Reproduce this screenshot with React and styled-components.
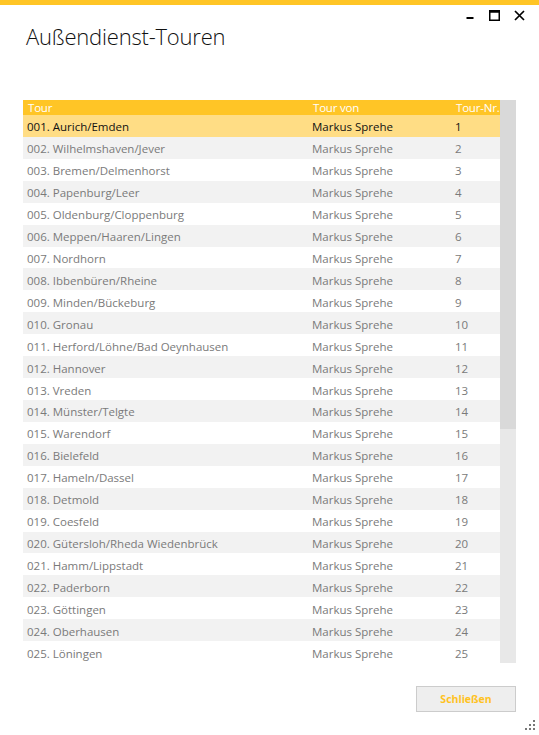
import React from "react";
import styled, { createGlobalStyle } from "styled-components";

const Global = createGlobalStyle`
  html, body { margin: 0; padding: 0; background: #fff; }
  body { font-family: "Open Sans", "Noto Sans", sans-serif; }
`;

const Window = styled.div`
  position: relative;
  width: 539px;
  height: 735px;
  box-sizing: border-box;
  border-top: 5px solid #ffc526;
  background: #fff;
  display: flex;
  flex-direction: column;
`;

const TitleBar = styled.div`
  display: flex;
  justify-content: flex-end;
  align-items: center;
  height: 14px;
  padding: 3px 7px 0 0;
`;

const WinBtn = styled.div`
  width: 25px;
  height: 12px;
  display: flex;
  align-items: center;
  justify-content: center;
`;

const Title = styled.h1`
  margin: 0;
  padding: 0 0 0 26px;
  font-family: "Open Sans", sans-serif;
  font-weight: 300;
  font-size: 22px;
  line-height: 28px;
  color: #111;
  letter-spacing: -0.2px;
`;

const TableArea = styled.div`
  margin: 50px 23px 0 23px;
  display: flex;
  height: 563px;
`;

const Table = styled.div`
  flex: 1;
  display: flex;
  flex-direction: column;
`;

const Row = styled.div`
  display: grid;
  box-sizing: border-box;
  grid-template-columns: 285px 143px 1fr;
  height: ${(p) => (p.$header ? "15px" : "22px")};
  padding-top: ${(p) => (p.$header ? "0" : "2px")};
  align-items: center;
  background: ${(p) =>
    p.$header ? "#ffc526" : p.$selected ? "#ffdd85" : p.$alt ? "#f2f2f2" : "#fff"};
  color: ${(p) => (p.$header ? "#fff" : p.$selected ? "#111" : "#7a7a7a")};
  font-size: 11.5px;
  line-height: 15px;
  white-space: nowrap;
`;

const Cell = styled.div`
  padding-left: ${(p) => (p.$header ? "5px" : "4px")};
  overflow: visible;
  letter-spacing: ${(p) => (p.$header ? "-0.2px" : "0")};
`;

const Scrollbar = styled.div`
  width: 17px;
  height: 563px;
  background: #e8e8e8;
  display: flex;
  flex-direction: column;
`;

const Thumb = styled.div`
  height: 329px;
  background: #d9d9d9;
`;

const Footer = styled.div`
  display: flex;
  justify-content: flex-end;
  padding: 23px 23px 0 0;
`;

const Button = styled.button`
  width: 100px;
  height: 26px;
  background: #eeeeee;
  border: 1px solid #cccccc;
  color: #ffc21f;
  font-family: "Open Sans", sans-serif;
  font-weight: 700;
  font-size: 10.5px;
  padding: 0;
  cursor: pointer;
`;

const Grip = styled.svg`
  position: absolute;
  right: 4px;
  bottom: 5px;
`;

const tours = [
  "Aurich/Emden",
  "Wilhelmshaven/Jever",
  "Bremen/Delmenhorst",
  "Papenburg/Leer",
  "Oldenburg/Cloppenburg",
  "Meppen/Haaren/Lingen",
  "Nordhorn",
  "Ibbenbüren/Rheine",
  "Minden/Bückeburg",
  "Gronau",
  "Herford/Löhne/Bad Oeynhausen",
  "Hannover",
  "Vreden",
  "Münster/Telgte",
  "Warendorf",
  "Bielefeld",
  "Hameln/Dassel",
  "Detmold",
  "Coesfeld",
  "Gütersloh/Rheda Wiedenbrück",
  "Hamm/Lippstadt",
  "Paderborn",
  "Göttingen",
  "Oberhausen",
  "Löningen",
];

export default function App() {
  return (
    <>
      <Global />
      <Window>
        <TitleBar>
          <WinBtn>
            <svg width="8" height="12" viewBox="0 0 8 12">
              <rect x="0.5" y="8" width="7" height="2" fill="#000" />
            </svg>
          </WinBtn>
          <WinBtn>
            <svg width="11" height="11" viewBox="0 0 11 11">
              <rect x="0.75" y="0.75" width="9.5" height="9.5" fill="none" stroke="#000" strokeWidth="1.5" />
              <rect x="0.75" y="0.75" width="9.5" height="2" fill="#000" />
            </svg>
          </WinBtn>
          <WinBtn>
            <svg width="11" height="11" viewBox="0 0 11 11">
              <path d="M1 1 L10 10 M10 1 L1 10" stroke="#000" strokeWidth="1.7" />
            </svg>
          </WinBtn>
        </TitleBar>
        <Title>Außendienst-Touren</Title>
        <TableArea>
          <Table>
            <Row $header>
              <Cell $header>Tour</Cell>
              <Cell $header>Tour von</Cell>
              <Cell $header>Tour-Nr.</Cell>
            </Row>
            {tours.map((t, i) => (
              <Row key={i} $selected={i === 0} $alt={i % 2 === 1}>
                <Cell>{`${String(i + 1).padStart(3, "0")}. ${t}`}</Cell>
                <Cell>Markus Sprehe</Cell>
                <Cell>{i + 1}</Cell>
              </Row>
            ))}
          </Table>
          <Scrollbar>
            <Thumb />
          </Scrollbar>
        </TableArea>
        <Footer>
          <Button>Schließen</Button>
        </Footer>
        <Grip width="10" height="10" viewBox="0 0 10 10">
          <rect x="8" y="0" width="2" height="2" fill="#777" />
          <rect x="4" y="4" width="2" height="2" fill="#777" />
          <rect x="8" y="4" width="2" height="2" fill="#777" />
          <rect x="0" y="8" width="2" height="2" fill="#777" />
          <rect x="4" y="8" width="2" height="2" fill="#777" />
          <rect x="8" y="8" width="2" height="2" fill="#777" />
        </Grip>
      </Window>
    </>
  );
}
